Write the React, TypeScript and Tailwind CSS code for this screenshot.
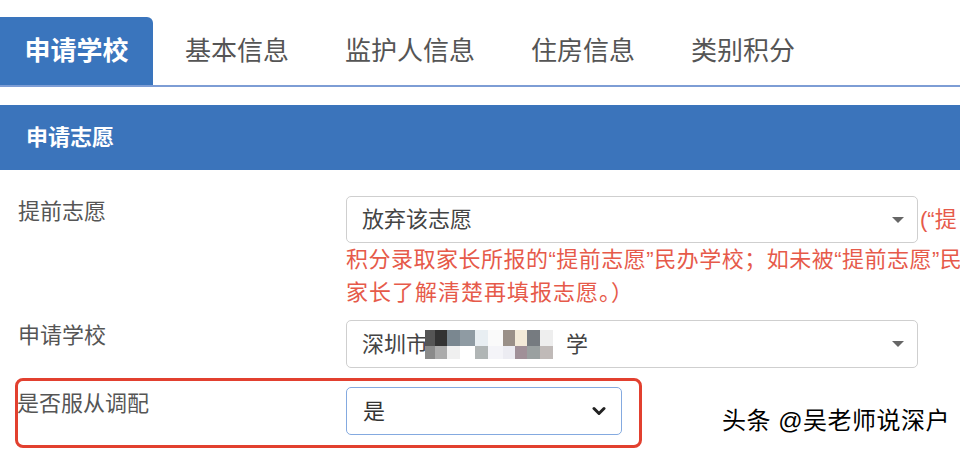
import React from "react";

const FONT = '"Liberation Sans", "Noto Sans CJK SC", sans-serif';

function Caret() {
  return (
    <svg width="12" height="6" viewBox="0 0 12 6" className="absolute right-[13px] top-1/2 -translate-y-1/2">
      <path d="M0 0 L12 0 L6 6 Z" fill="#666" />
    </svg>
  );
}

function Mosaic() {
  const row1 = [
    ["#555555", 10], ["#333333", 12], ["#7a8790", 13], ["#8f9ba3", 15], ["#e8eef2", 13],
    ["#fafafa", 15], ["#9a9088", 12], ["#f3ead8", 12], ["#767b80", 13], ["#eeeeee", 13],
  ] as const;
  const row2 = [
    ["#8a8a8a", 10], ["#ababab", 12], ["#f0f0f0", 13], ["#ffffff", 15], ["#b0b5b5", 13],
    ["#f4f4f8", 15], ["#ececf2", 12], ["#a09098", 12], ["#9aa0a0", 13], ["#c0bab8", 13],
  ] as const;
  return (
    <div className="flex flex-col ml-[-3px]">
      <div className="flex h-[16px]">
        {row1.map(([c, w], i) => (
          <div key={i} style={{ backgroundColor: c, width: w }} />
        ))}
      </div>
      <div className="flex h-[13px]">
        {row2.map(([c, w], i) => (
          <div key={i} style={{ backgroundColor: c, width: w }} />
        ))}
      </div>
    </div>
  );
}

export default function App() {
  const tabs = ["基本信息", "监护人信息", "住房信息", "类别积分"];
  return (
    <div className="relative w-[960px] h-[450px] overflow-hidden bg-white" style={{ fontFamily: FONT }}>
      {/* Tabs */}
      <div className="flex items-end h-[87px] border-b-2 border-[#7d9dd5]">
        <div className="h-[68px] w-[153px] flex items-center justify-center bg-[#3a75bd] rounded-tr-[6px] text-white font-bold text-[26px] leading-none">
          申请学校
        </div>
        <div className="flex ml-[4px]">
          {tabs.map((t) => (
            <div key={t} className="h-[68px] px-[28px] flex items-center text-[26px] leading-none text-[#555]">
              {t}
            </div>
          ))}
        </div>
      </div>

      {/* Section header */}
      <div className="mt-[18px] h-[65px] bg-[#3b74bb] flex items-center pl-[26px] text-white font-bold text-[22px]">
        申请志愿
      </div>

      {/* Row 1 */}
      <div className="flex mt-[26px]">
        <div className="w-[346px] pl-[18px] pt-[5px] text-[22px] leading-[22px] text-[#555] shrink-0">提前志愿</div>
        <div className="flex flex-col">
          <div className="flex items-center whitespace-nowrap">
            <div className="relative w-[572px] h-[47px] border border-[#cfcfcf] rounded-[5px] flex items-center pl-[15px] text-[22px] text-[#444] shrink-0">
              放弃该志愿
              <Caret />
            </div>
            <span className="ml-[2px] text-[22px] text-[#e65a4a]">(“提</span>
          </div>
          <div className="text-[22px] leading-[33px] tracking-[0.5px] text-[#e65a4a] whitespace-nowrap">
            积分录取家长所报的“提前志愿”民办学校；如未被“提前志愿”民
          </div>
          <div className="text-[22px] leading-[33px] tracking-[1px] text-[#e65a4a] whitespace-nowrap">
            家长了解清楚再填报志愿。）
          </div>
        </div>
      </div>

      {/* Row 2 */}
      <div className="flex mt-[11px]">
        <div className="w-[346px] pl-[18px] pt-[5px] text-[22px] leading-[22px] text-[#555] shrink-0">申请学校</div>
        <div className="relative w-[572px] h-[48px] border border-[#cfcfcf] rounded-[5px] flex items-center pl-[15px] text-[22px] text-[#444]">
          深圳市
          <Mosaic />
          <span className="ml-[13px]">学</span>
          <Caret />
        </div>
      </div>

      {/* Row 3 */}
      <div className="flex mt-[19px]">
        <div className="w-[346px] pl-[17px] pt-[6px] text-[22px] leading-[22px] text-[#555] shrink-0">是否服从调配</div>
        <div className="relative w-[276px] h-[48px] border border-[#84aae0] rounded-[5px] flex items-center pl-[16px] text-[22px] text-[#333]">
          是
          <svg width="14" height="10" viewBox="0 0 14 10" className="absolute right-[15px] top-1/2 -translate-y-1/2">
            <path d="M2 2.5 L7 7.5 L12 2.5" fill="none" stroke="#222" strokeWidth="3" strokeLinecap="round" strokeLinejoin="round" />
          </svg>
        </div>
      </div>

      {/* Red annotation box */}
      <div className="absolute left-[15px] top-[378px] w-[627px] h-[70px] border-[3px] border-[#e2402f] rounded-[8px] pointer-events-none" />

      {/* Watermark */}
      <div
        className="absolute left-[722px] top-[406px] text-[24px] leading-[30px] tracking-[0.5px] text-black whitespace-nowrap"
        style={{ textShadow: "0 0 2px #fff, 0 0 2px #fff" }}
      >
        头条 @吴老师说深户
      </div>
    </div>
  );
}
